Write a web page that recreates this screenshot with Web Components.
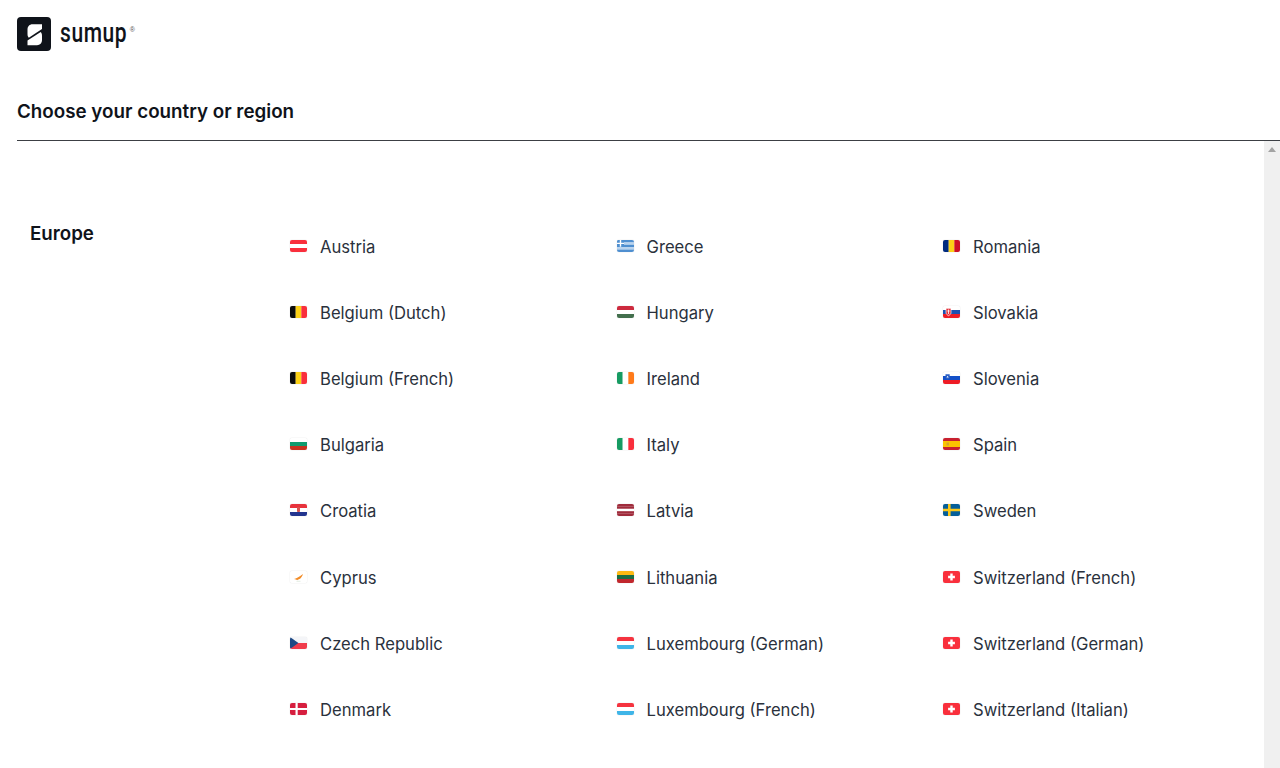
<!DOCTYPE html>
<html lang="en">
<head>
<meta charset="utf-8">
<title>SumUp - Choose your country or region</title>
<style>
  html, body { margin: 0; height: 100%; background: #fff; overflow: hidden; }
  body { font-family: Inter, "Liberation Sans", sans-serif; color: #0f131a; }
</style>
</head>
<body>
<country-page>
  <sumup-logo slot="logo"></sumup-logo>
  <span slot="title">Choose your country or region</span>
  <region-section name="Europe" id="europe"></region-section>
</country-page>

<script>
const stripes = (colors, dir) => colors.map((c, i) => {
    const n = colors.length;
    return dir === 'v'
        ? `<rect x="${i * 17 / n}" y="0" width="${17 / n + .1}" height="12" fill="${c}"/>`
        : `<rect x="0" y="${i * 12 / n}" width="17" height="${12 / n + .1}" fill="${c}"/>`;
}).join('');

const red = '#f92f3c';
const swiss = `<rect width="17" height="12" fill="${red}"/><path d="M7.300 2.600h2.400v2.200h2.200v2.400H9.700v2.200H7.300V7.200H5.100V4.800h2.200z" fill="#fff"/>`;
const lux = stripes(['#f5333f', '#fff', '#3fb5e8']);
const be = stripes(['#0c0c0c', '#fcd116', red], 'v');

const flags = {
    at: stripes([red, '#fff', red]),
    be,
    bg: stripes(['#fff', '#0f9b6e', '#c8321e']),
    hr: stripes(['#e8323c', '#fff', '#23358f']) + '<rect x="7" y="3" width="3" height="5" rx=".8" fill="#d9534f"/>',
    cy: '<rect width="17" height="12" fill="#fff"/><path d="M4 8c2-.5 5-2 9-5-.5 2-2 4.500-4 5.300-1 .4-1.500.5-2 1-.5-.8-1.500-1-3-1.300z" fill="#f28c28"/><path d="M6.500 10.300h4" stroke="#d7e6d7" stroke-width=".7"/>',
    cz: stripes(['#f4f5f8', '#f03c4c']) + '<path d="M0 0l8.400 6L0 12z" fill="#1f4a85"/>',
    dk: `<rect width="17" height="12" fill="#d61f3f"/><path d="M5.500 0h2.200v12H5.500zM0 4.900h17v2.200H0z" fill="#fff"/>`,
    gr: stripes(['#4f8fd0', '#b9d3ee', '#4f8fd0', '#b9d3ee', '#4f8fd0']) + '<rect width="7" height="6.800" fill="#4f8fd0"/><path d="M2.800 0h1.400v6.800H2.800zM0 2.700h7v1.400H0z" fill="#fff"/>',
    hu: stripes(['#cd2a3e', '#fff', '#436f4d']),
    ie: stripes(['#169b62', '#fff', '#ff7a1a'], 'v'),
    it: stripes(['#169b62', '#fff', red], 'v'),
    lv: stripes(['#a02c3c', '#a02c3c', '#fff', '#a02c3c', '#a02c3c']),
    lt: stripes(['#fdb913', '#1a6d44', '#c1272d']),
    lu: lux,
    ro: stripes(['#002b7f', '#fcd116', '#ce1126'], 'v'),
    sk: stripes(['#fff', '#1d4fb0', '#ee1c25']) + '<path d="M3 2.300h5v4.400c0 1.600-1.500 2.400-2.500 3-1-.6-2.500-1.400-2.500-3z" fill="#e4303a" stroke="#fff" stroke-width=".7"/><path d="M5.500 3.500v4.500M4.300 5h2.400" stroke="#fff" stroke-width=".8"/>',
    si: stripes(['#fff', '#1450c8', '#ee1c25']) + '<path d="M2.500 2.300h4.200v3c0 1.200-1.300 1.800-2.100 2.100-.8-.3-2.100-.9-2.100-2.100z" fill="#2a5fc4"/><path d="M3.500 5.500l1.100-1.700 1.100 1.700z" fill="#fff"/>',
    es: '<rect width="17" height="12" fill="#c8202f"/><rect y="3" width="17" height="6" fill="#fbc400"/><rect x="3.500" y="4.500" width="2.500" height="3" fill="#d8a030"/>',
    se: '<rect width="17" height="12" fill="#055f9a"/><path d="M5 0h2.600v12H5zM0 4.700h17v2.600H0z" fill="#fdc918"/>',
    ch: swiss
};

const columns = [
    [['at', 'Austria'], ['be', 'Belgium (Dutch)'], ['be', 'Belgium (French)'], ['bg', 'Bulgaria'], ['hr', 'Croatia'], ['cy', 'Cyprus'], ['cz', 'Czech Republic'], ['dk', 'Denmark']],
    [['gr', 'Greece'], ['hu', 'Hungary'], ['ie', 'Ireland'], ['it', 'Italy'], ['lv', 'Latvia'], ['lt', 'Lithuania'], ['lu', 'Luxembourg (German)'], ['lu', 'Luxembourg (French)']],
    [['ro', 'Romania'], ['sk', 'Slovakia'], ['si', 'Slovenia'], ['es', 'Spain'], ['se', 'Sweden'], ['ch', 'Switzerland (French)'], ['ch', 'Switzerland (German)'], ['ch', 'Switzerland (Italian)']]
];

class SumupLogo extends HTMLElement {
    constructor() {
        super();
        this.attachShadow({mode: 'open'}).innerHTML = `
<style>
  :host { display: flex; align-items: center; height: 34px; color: #0f131a; }
  svg { display: block; flex: none; }
  .word {
    margin: 0 -22px 0 9px;
    font: 500 28px/34px Roboto, sans-serif;
    letter-spacing: .8px;
    white-space: nowrap;
    transform: translateY(-1px) scaleX(.75);
    transform-origin: left center;
  }
  sup { font: 400 7px/1 "Liberation Sans", sans-serif; margin: -9px 0 0 2px; color: #555; }
</style>
<svg width="34" height="34" viewBox="0 0 34 34">
  <rect width="34" height="34" rx="4" fill="#0f131a"/>
  <g fill="#fff">
    <path d="M25 7.300H15.500c-3 0-5 2.200-5 5.200V17c0 1.600.5 2.900 1.300 3.700L25 12z"/>
    <path d="M10.500 28.300H20c3 0 5-2.200 5-5.200v-4.500c0-1.600-.5-2.900-1.300-3.700L10.500 23.600z"/>
  </g>
</svg>
<span class="word">sumup</span><sup>®</sup>`;
    }
}

class CountryFlag extends HTMLElement {
    constructor() {
        super();
        this.attachShadow({mode: 'open'});
    }

    connectedCallback() {
        this.shadowRoot.innerHTML = `
<style>
  :host { display: block; width: 17px; height: 12px; flex: none; }
  svg { display: block; border-radius: 2px; box-shadow: 0 0 1px rgba(0, 0, 0, .25); filter: blur(.25px); }
</style>
<svg width="17" height="12" viewBox="0 0 17 12">${flags[this.getAttribute('code')]}</svg>`;
    }
}

class CountryLink extends HTMLElement {
    constructor() {
        super();
        this.attachShadow({mode: 'open'});
    }

    connectedCallback() {
        this.shadowRoot.innerHTML = `
<style>
  :host { display: flex; align-items: center; height: 66.12px; gap: 13px; font-size: 16.64px; color: #2a313c; }
  span { position: relative; top: 1px; }
</style>
<country-flag code="${this.getAttribute('code')}"></country-flag>
<span><slot></slot></span>`;
    }
}

class RegionSection extends HTMLElement {
    constructor() {
        super();
        this.attachShadow({mode: 'open'});
    }

    connectedCallback() {
        const cols = columns.map(col => `<div>${col.map(([code, name]) =>
            `<country-link code="${code}">${name}</country-link>`).join('')}</div>`).join('');
        this.shadowRoot.innerHTML = `
<style>
  :host { display: grid; grid-template-columns: 260px 1fr; padding: 72px 0 0 30px; }
  h2 { margin: 9px 0 0; font-size: 18.72px; line-height: 24px; font-weight: 600; color: #0f131a; }
  .list { display: grid; grid-template-columns: repeat(3, 326.5px); }
</style>
<h2>${this.getAttribute('name')}</h2>
<div class="list">${cols}</div>`;
    }
}

class CountryPage extends HTMLElement {
    constructor() {
        super();
        this.attachShadow({mode: 'open'}).innerHTML = `
<style>
  :host { display: flex; flex-direction: column; height: 768px; overflow: hidden; }
  header { padding: 17px 0 0 17px; }
  h1 { margin: 48px 0 0; padding-bottom: 15px; font-size: 18.8px; line-height: 26px; font-weight: 600; color: #0f131a; border-bottom: 1px solid #3c3f44; }
  .body { flex: 1; min-height: 0; display: flex; }
  .scroll { flex: 1; min-width: 0; overflow: hidden; }
  .bar { width: 16px; flex: none; background: #f0f0f0; display: flex; justify-content: center; padding-top: 6px; box-sizing: border-box; }
  .bar i { width: 0; height: 0; border: 4px solid transparent; border-top: 0; border-bottom: 5px solid #a3a3a3; }
</style>
<header>
  <slot name="logo"></slot>
  <h1><slot name="title"></slot></h1>
</header>
<div class="body">
  <div class="scroll"><slot></slot></div>
  <div class="bar"><i></i></div>
</div>`;
    }
}

customElements.define('sumup-logo', SumupLogo);
customElements.define('country-flag', CountryFlag);
customElements.define('country-link', CountryLink);
customElements.define('region-section', RegionSection);
customElements.define('country-page', CountryPage);
</script>
</body>
</html>
